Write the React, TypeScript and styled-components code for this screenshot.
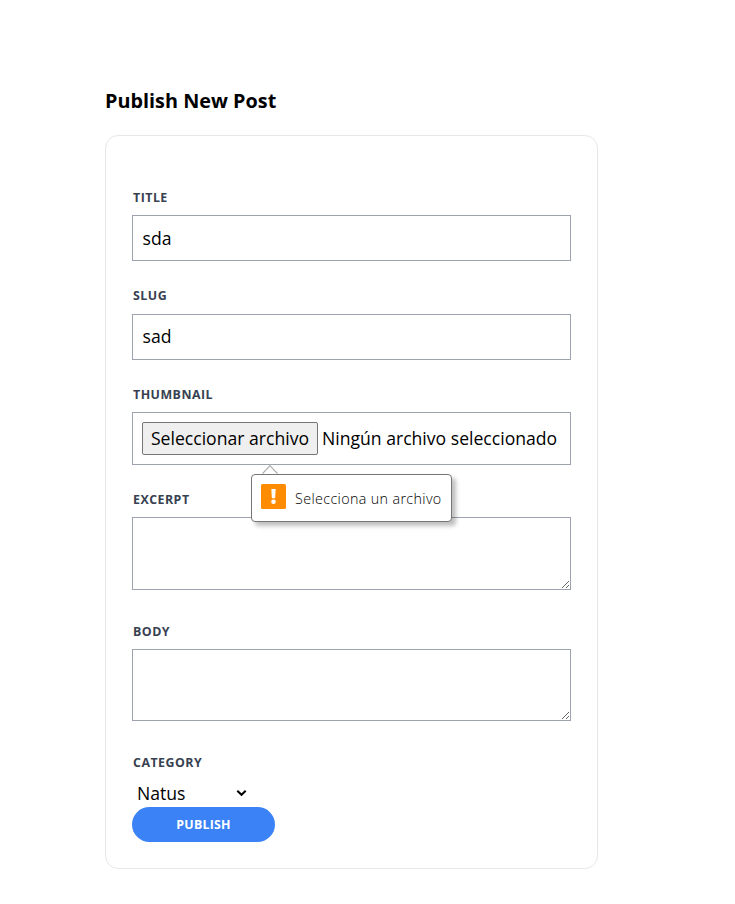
import React from "react";
import styled, { createGlobalStyle } from "styled-components";

const GlobalStyle = createGlobalStyle`
  *, *::before, *::after { box-sizing: border-box; }
  body {
    margin: 0;
    background: #fff;
    color: #000;
    font-family: "Open Sans", sans-serif;
    font-size: 17.6px;
    line-height: 26px;
  }
`;

const Page = styled.main`
  width: 493px;
  margin-left: 105px;
  padding-top: 85px;
`;

const Heading = styled.h1`
  margin: 0 0 19px;
  font-size: 19.8px;
  line-height: 31px;
  font-weight: 700;
  letter-spacing: 0.02px;
`;

const Panel = styled.form`
  display: flex;
  flex-direction: column;
  height: 734px;
  padding: 52px 26px 26px;
  border: 1px solid #e5e7eb;
  border-radius: 13.2px;
`;

const Field = styled.div<{ $gap: number; $labelGap?: number }>`
  position: relative;
  display: flex;
  flex-direction: column;
  gap: ${(p) => p.$labelGap ?? 9}px;
  margin-bottom: ${(p) => p.$gap}px;
`;

const Label = styled.label`
  height: 18px;
  padding-left: 1px;
  font-size: 12.4px;
  line-height: 19px;
  font-weight: 700;
  letter-spacing: 0.48px;
  text-transform: uppercase;
  color: #374151;
`;

const TextInput = styled.input<{ $lift?: number }>`
  width: 439px;
  height: 46px;
  margin: 0;
  padding: 0 9.5px ${(p) => p.$lift ?? 0}px;
  border: 1px solid #9ca3af;
  border-radius: 0;
  outline: none;
  background: #fff;
  color: #000;
  font: inherit;
`;

const FileBox = styled.div`
  display: flex;
  align-items: center;
  gap: 4px;
  width: 439px;
  height: 53px;
  padding: 0 9px;
  border: 1px solid #9ca3af;
  white-space: nowrap;
`;

const FileName = styled.span`
  padding-bottom: 2px;
`;

const FileButton = styled.button`
  width: 176px;
  height: 33px;
  padding: 0 0 2px;
  border: 1px solid #767676;
  border-radius: 2px;
  background: #efefef;
  color: #000;
  font: inherit;
`;

const TextArea = styled.textarea<{ $height: number }>`
  width: 439px;
  height: ${(p) => p.$height}px;
  margin: 0;
  padding: 9px;
  border: 1px solid #9ca3af;
  border-radius: 0;
  outline: none;
  background: #fff;
  font: inherit;
`;

const Tooltip = styled.div`
  position: absolute;
  z-index: 1;
  top: 89px;
  left: 119px;
  display: flex;
  align-items: center;
  width: 201px;
  height: 48px;
  padding: 0 9px;
  border: 1px solid #767676;
  border-radius: 4px;
  background: #fff;
  box-shadow: 4px 4px 4px rgba(0, 0, 0, 0.25);
  color: #000;
  font-size: 14.3px;
  font-weight: 300;
  letter-spacing: 0.37px;
  white-space: nowrap;
`;

const TooltipText = styled.span`
  padding-top: 2px;
`;

const TooltipArrow = styled.svg`
  position: absolute;
  top: -10px;
  left: 10px;
`;

const WarningIcon = styled.svg`
  flex: none;
  margin: -3px 9px 0 0;
`;

const Category = styled.button`
  display: flex;
  align-items: center;
  justify-content: space-between;
  width: 119px;
  height: 27px;
  padding: 0 4px 2px 5px;
  border: 0;
  background: #fff;
  color: #000;
  font: inherit;
`;

const PublishButton = styled.button`
  width: 143px;
  height: 35px;
  padding: 0;
  border: 0;
  border-radius: 18px;
  background: #3b82f6;
  color: #fff;
  font-family: inherit;
  font-size: 12.4px;
  line-height: 18px;
  font-weight: 700;
  letter-spacing: 0.2px;
  text-transform: uppercase;
`;

export default function App() {
  return (
    <>
      <GlobalStyle />
      <Page>
        <Heading>Publish New Post</Heading>
        <Panel onSubmit={(e) => e.preventDefault()}>
          <Field $gap={25}>
            <Label htmlFor="title">Title</Label>
            <TextInput id="title" defaultValue="sda" />
          </Field>
          <Field $gap={25} $labelGap={10}>
            <Label htmlFor="slug">Slug</Label>
            <TextInput id="slug" defaultValue="sad" $lift={2} />
          </Field>
          <Field $gap={25}>
            <Label>Thumbnail</Label>
            <FileBox>
              <FileButton type="button">Seleccionar archivo</FileButton>
              <FileName>Ningún archivo seleccionado</FileName>
            </FileBox>
            <Tooltip role="alert">
              <TooltipArrow width="17" height="11" viewBox="0 0 17 11">
                <path d="M0.5 8.7 8 0.7 15.5 8.7V9H0.5Z" fill="#fff" />
                <path d="M0.5 8.7 8 0.7 15.5 8.7" fill="none" stroke="#aaa" strokeWidth="1.2" />
              </TooltipArrow>
              <WarningIcon width="25" height="25" viewBox="0 0 25 25">
                <rect width="25" height="25" rx="1.5" fill="#ff8c00" />
                <path d="M10.3 5h4.4l-.6 9.3h-3.2z" fill="#fff" />
                <circle cx="12.5" cy="17.8" r="2.3" fill="#fff" />
              </WarningIcon>
              <TooltipText>Selecciona un archivo</TooltipText>
            </Tooltip>
          </Field>
          <Field $gap={32}>
            <Label htmlFor="excerpt">Excerpt</Label>
            <TextArea id="excerpt" $height={73} />
          </Field>
          <Field $gap={32}>
            <Label htmlFor="body">Body</Label>
            <TextArea id="body" $height={72} />
          </Field>
          <Field $gap={0}>
            <Label>Category</Label>
            <Category type="button" aria-haspopup="listbox">
              <span>Natus</span>
              <svg width="11" height="8" viewBox="0 0 11 8" fill="none">
                <path d="M1.3 1.8 5.5 5.8 9.7 1.8" stroke="#000" strokeWidth="2" />
              </svg>
            </Category>
          </Field>
          <PublishButton type="submit">Publish</PublishButton>
        </Panel>
      </Page>
    </>
  );
}
